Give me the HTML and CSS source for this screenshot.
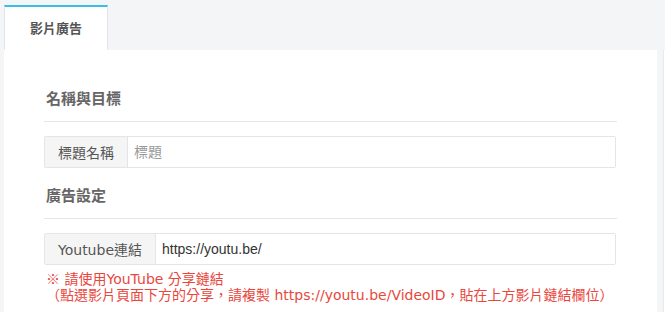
FILE: index.html
```html
<!DOCTYPE html>
<html lang="zh-Hant">
<head>
  <meta charset="UTF-8" />
  <meta name="viewport" content="width=device-width, initial-scale=1" />
  <title>影片廣告</title>
  <link rel="stylesheet" href="styles.css">
</head>
<body>

  <div class="page">
    <div class="main">
      <div class="tabs">
        <div class="tab active">影片廣告</div>
      </div>

      <div class="panel">
        <h4 class="section-title">名稱與目標</h4>
        <hr class="divider" />
        <div class="input-group">
          <span class="addon">標題名稱</span>
          <input class="field" type="text" placeholder="標題" />
        </div>

        <h4 class="section-title">廣告設定</h4>
        <hr class="divider" />
        <div class="input-group">
          <span class="addon">Youtube連結</span>
          <input class="field" type="text" value="https://youtu.be/" />
        </div>
        <p class="hint"><span class="mark">※</span> 請使用YouTube 分享鏈結<br>（點選影片頁面下方的分享，請複製 https://youtu.be/VideoID，貼在上方影片鏈結欄位）</p>
      </div>
    </div>

    <div class="side"></div>
  </div>

</body>
</html>
```

FILE: styles.css
```css
* {
  box-sizing: border-box;
}

body {
  margin: 0;
  background: #f4f5f7;
  font-family: "DejaVu Sans", "Noto Sans CJK TC", sans-serif;
  color: #555;
  overflow: hidden;
}

.page {
  display: flex;
  align-items: flex-start;
  padding: 5px 0 0 4px;
}

.main {
  width: 653px;
  flex-shrink: 0;
}

.tabs {
  display: flex;
  height: 45px;
}

.tab {
  width: 104px;
  height: 45px;
  line-height: 43px;
  text-align: center;
  font-size: 13px;
  font-weight: bold;
  color: #555;
}

.tab.active {
  background: white;
  border-top: 2px solid #3cbde2;
  border-left: 1px solid #e2e4e7;
  border-right: 1px solid #e2e4e7;
}

.panel {
  background: white;
  padding: 39px 40px 0 40px;
  height: 262px;
}

.section-title {
  margin: 0;
  font-size: 15px;
  line-height: 21px;
  font-weight: bold;
  color: #666;
  padding-left: 2px;
}

.divider {
  border: none;
  border-top: 1px solid #e6e7e9;
  margin: 11px 0 14px 0;
}

.input-group {
  display: flex;
  height: 32px;
  width: 572px;
  border: 1px solid #e4e5e7;
  border-radius: 2px;
  margin-bottom: 18px;
}

.addon {
  display: flex;
  align-items: center;
  padding: 0 13px;
  background: #f5f5f5;
  border-right: 1px solid #e4e5e7;
  font-size: 14px;
  color: #555;
  white-space: nowrap;
}

.field {
  flex: 1;
  min-width: 0;
  border: none;
  outline: none;
  padding: 0 6px;
  font-family: "Liberation Sans", "Noto Sans CJK TC", sans-serif;
  font-size: 14px;
  color: #333;
  background: white;
}

.field::placeholder {
  color: #999;
}

.input-group + .hint {
  margin-top: -13px;
}

.hint {
  margin: 0;
  font-size: 14px;
  line-height: 16px;
  color: #e9473d;
  padding-left: 2px;
}

.hint .mark {
  font-family: "Noto Sans CJK TC", sans-serif;
}

.side {
  margin: 45px 0 0 6px;
  width: 4px;
  height: 262px;
  background: white;
  border-left: 1px solid #e8e9eb;
}
```
